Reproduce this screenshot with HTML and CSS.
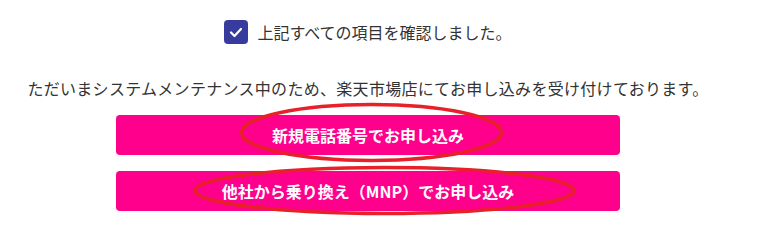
FILE: index.html
```html
<!DOCTYPE html>
<html lang="ja">
<head>
<meta charset="utf-8">
<title>お申し込み</title>
<link rel="stylesheet" href="styles.css">
</head>
<body>
<div class="page">
  <label class="confirm">
    <span class="box">
      <svg viewBox="0 0 24 24" width="24" height="24"><path d="M7 12.5 L10.5 16 L17 9" fill="none" stroke="#fff" stroke-width="2.2" stroke-linecap="round" stroke-linejoin="round"/></svg>
    </span>
    <span class="confirm-text">上記すべての項目を確認しました。</span>
  </label>
  <p class="notice">ただいまシステムメンテナンス中のため、楽天市場店にてお申し込みを受け付けております。</p>
  <div class="buttons">
    <a class="btn" href="#">新規電話番号でお申し込み</a>
    <a class="btn" href="#">他社から乗り換え（MNP）でお申し込み</a>
  </div>
  <svg class="marks" width="763" height="233" viewBox="0 0 763 233">
    <ellipse cx="371.5" cy="132.5" rx="130" ry="28" fill="none" stroke="#e8202a" stroke-width="3.5"/>
    <ellipse cx="384.5" cy="190.5" rx="189.5" ry="23" fill="none" stroke="#e8202a" stroke-width="3.5"/>
  </svg>
</div>
</body>
</html>
```
FILE: styles.css
```css
html, body {
  margin: 0;
  padding: 0;
  background: #fff;
}
body {
  font-family: "Noto Sans CJK JP", "Noto Sans", sans-serif;
  color: #333;
}
.page {
  position: relative;
  width: 736px;
  height: 233px;
  padding-top: 20px;
  box-sizing: border-box;
  display: flex;
  flex-direction: column;
  align-items: center;
}
.confirm {
  display: flex;
  align-items: center;
  gap: 9px;
  height: 24px;
}
.box {
  width: 24px;
  height: 24px;
  border-radius: 4px;
  background: #383b9e;
  display: flex;
}
.confirm-text {
  font-size: 16px;
  line-height: 24px;
}
.notice {
  margin: 32px 0 0;
  font-size: 16px;
  line-height: 24px;
  letter-spacing: 0.3px;
  white-space: nowrap;
  text-align: center;
}
.buttons {
  margin-top: 15px;
  display: flex;
  flex-direction: column;
  gap: 16px;
}
.btn {
  width: 504px;
  height: 40px;
  border-radius: 4px;
  background: #ff008c;
  color: #fff;
  font-weight: 700;
  font-size: 16px;
  display: flex;
  align-items: center;
  justify-content: center;
  text-decoration: none;
}
.marks {
  position: absolute;
  left: 0;
  top: 0;
  pointer-events: none;
}
```
